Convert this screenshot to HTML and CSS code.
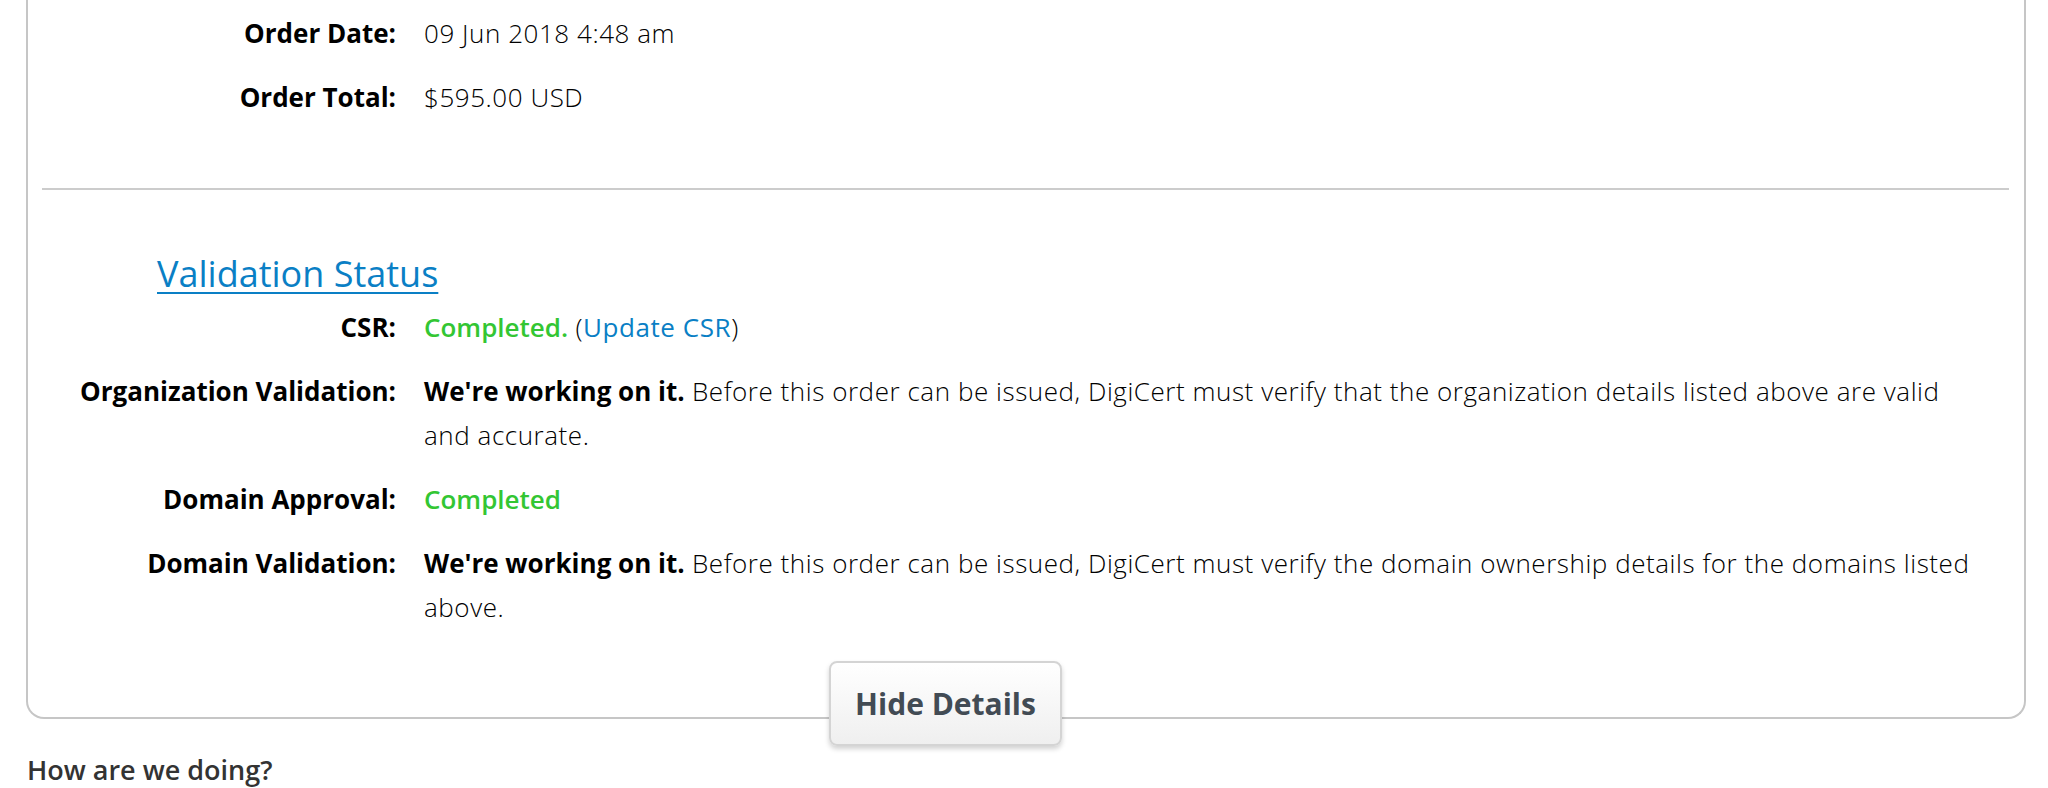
FILE: index.html
```html
<!DOCTYPE html>
<html lang="en">
<head>
<meta charset="UTF-8">
<title>Order Details</title>
<link rel="stylesheet" href="styles.css">
</head>
<body>
<div class="page">
  <div class="card">
    <div class="row">
      <div class="label">Order Date:</div>
      <div class="value">09 Jun 2018 4:48 am</div>
    </div>
    <div class="row">
      <div class="label">Order Total:</div>
      <div class="value">$595.00 USD</div>
    </div>

    <hr class="divider">

    <h3 class="section-title"><a href="#">Validation Status</a></h3>
    <div class="row">
      <div class="label">CSR:</div>
      <div class="value"><span class="done">Completed.</span> (<a href="#" class="link">Update CSR</a>)</div>
    </div>
    <div class="row">
      <div class="label">Organization Validation:</div>
      <div class="value"><strong>We're working on it.</strong> Before this order can be issued, DigiCert must verify that the organization details listed above are valid and accurate.</div>
    </div>
    <div class="row">
      <div class="label">Domain Approval:</div>
      <div class="value"><span class="done">Completed</span></div>
    </div>
    <div class="row">
      <div class="label">Domain Validation:</div>
      <div class="value"><strong>We're working on it.</strong> Before this order can be issued, DigiCert must verify the domain ownership details for the domains listed above.</div>
    </div>

    <button class="toggle-btn" type="button">Hide Details</button>
  </div>

  <h4 class="feedback">How are we doing?</h4>
</div>
</body>
</html>
```

FILE: styles.css
```css
body {
  margin: 0;
  font-family: "Open Sans", "Noto Sans", sans-serif;
  background-color: #fff;
  color: #111;
}

.page {
  padding: 0 22px 0 26px;
}

.card {
  position: relative;
  border: 2px solid #c6c6c6;
  border-top: none;
  border-radius: 0 0 18px 18px;
  padding: 11px 15px 88px 14px;
}

.row {
  display: grid;
  grid-template-columns: 354px 1fr;
  column-gap: 28px;
  font-size: 26px;
  line-height: 44px;
  margin-bottom: 20px;
}

.row:last-of-type {
  margin-bottom: 0;
}

.label {
  text-align: right;
  font-weight: 700;
  color: #000;
}

.value {
  font-weight: 300;
  color: #000;
  letter-spacing: 0.55px;
  padding-right: 25px;
}

.value strong {
  font-weight: 700;
  color: #000;
  letter-spacing: 0;
}

.done {
  color: #33c633;
  font-weight: 600;
  letter-spacing: 0;
}

.link {
  color: #0a7fc5;
  font-weight: 400;
  text-decoration: none;
}

.divider {
  border: none;
  height: 2px;
  background-color: #cccccc;
  margin: 69px 0 62px;
}

.section-title {
  margin: 0 0 9px 115px;
  font-size: 36px;
  line-height: 44px;
  font-weight: 500;
}

.section-title a {
  color: #0a7fc5;
  text-decoration: underline;
  text-underline-offset: 5px;
  text-decoration-thickness: 2px;
}

.toggle-btn {
  position: absolute;
  left: 801px;
  bottom: -29px;
  width: 233px;
  height: 85px;
  font-family: "Open Sans", sans-serif;
  font-size: 30px;
  font-weight: 700;
  color: #424b54;
  background: linear-gradient(#ffffff, #efefef);
  border: 2px solid #d4d4d4;
  border-radius: 8px;
  box-shadow: 0 3px 5px rgba(0,0,0,0.18);
  cursor: pointer;
}

.feedback {
  margin: 33px 0 0 1px;
  font-size: 27px;
  line-height: 36px;
  font-weight: 600;
  color: #333;
}
```
